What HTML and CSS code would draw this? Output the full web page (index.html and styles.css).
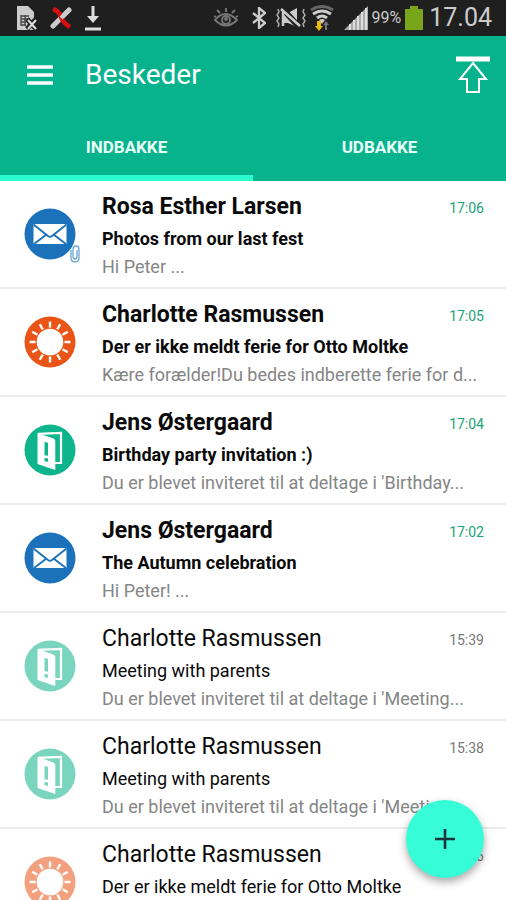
FILE: index.html
```html
<!DOCTYPE html>
<html lang="da">
<head>
<meta charset="utf-8">
<meta name="viewport" content="width=device-width, initial-scale=1">
<title>Beskeder</title>
<link rel="stylesheet" href="styles.css">
</head>
<body>
<svg class="sprite" aria-hidden="true">
  <symbol id="mail" viewBox="0 0 52 52">
    <circle cx="26" cy="26" r="25.500" fill="#1b72ba"/>
    <path d="M9.500 16h33v20h-33z" fill="#fff"/>
    <path d="M9.500 16.500l14.500 11.500q2 1.500 4 0l14.500-11.500M10 36l12.500-9.500M42 36l-12.500-9.500" fill="none" stroke="#1b72ba" stroke-width="1.900"/>
  </symbol>
  <symbol id="sun" viewBox="0 0 52 52">
    <circle cx="26" cy="26" r="25.500" fill="#ea5416"/>
    <circle cx="26" cy="26" r="13.300" fill="#fff"/>
    <g stroke="#fff" stroke-width="2.400">
      <path id="ray" d="M26 5.500v6M26 40.500v6M5.500 26h6M40.500 26h6"/>
      <use href="#ray" transform="rotate(30 26 26)"/>
      <use href="#ray" transform="rotate(60 26 26)"/>
    </g>
  </symbol>
  <symbol id="door" viewBox="0 0 52 52">
    <circle cx="26" cy="26" r="25.500" fill="#0eb48c"/>
    <path d="M14 9.800L37 9V39H31" fill="none" stroke="#fff" stroke-width="2.200"/>
    <path d="M13.500 9l3 1L29.500 14.500q1.800.8 1.800 3v28.500L13.500 40z" fill="#fff"/>
    <path d="M20.500 18l3.500.8v13l-3.500-.6zM20.500 34l3.500.6v3.200l-3.500-.6z" fill="#0eb48c"/>
  </symbol>
</svg>

<div class="status">
  <div class="status-group">
    <svg width="22" height="26" viewBox="0 0 22 26"><path d="M1 1h11l6 6v18H1z" fill="#ccc"/><path d="M5 11h8M5 14h8M5 17h5M5 20h5M5 10v11M9 10v11" stroke="#444" stroke-width="1.300"/><path d="M11 14l9 10M20 14l-9 10" stroke="#222" stroke-width="5"/><path d="M12 15l8 9M20 15l-8 9" stroke="#ddd" stroke-width="2"/></svg>
    <svg width="22" height="24" viewBox="0 0 22 24"><path d="M3 20L19 4" stroke="#ccc" stroke-width="5" stroke-linecap="round"/><path d="M3 3q6 2 8 8t9 10" fill="none" stroke="#d3100f" stroke-width="4.500"/><path d="M11 12l9-9" stroke="#ccc" stroke-width="4"/></svg>
    <svg width="18" height="26" viewBox="0 0 18 26"><path d="M9 1v14M1 24h16" stroke="#ddd" stroke-width="3"/><path d="M3 11h12l-6 7z" fill="#ddd"/></svg>
  </div>
  <div class="status-group status-right">
    <svg width="24" height="20" viewBox="0 0 24 20" fill="none" stroke="#777" stroke-width="1.900"><path d="M1 12q10-12 22 0q-11 11-22 0zM12 4V0M6 5L3 2M18 5l3-3M2 9l-2-1M22 9l2-1"/><circle cx="12" cy="12" r="4"/><circle cx="12" cy="11" r="1" fill="#777"/></svg>
    <svg class="bluetooth" width="14" height="22" viewBox="0 0 14 22" fill="none" stroke="#ccc" stroke-width="2.300"><path d="M1 6l12 10-6 5V1l6 5L1 16"/></svg>
    <svg class="muted" width="30" height="22" viewBox="0 0 30 22"><path d="M7 6h5l9-5v19l-9-4H7z" fill="#ccc"/><path d="M5 0l19 21" stroke="#222" stroke-width="6"/><path d="M7 3v16M5 2l19 17" stroke="#ccc" stroke-width="2.500"/><path d="M2 2l1 3-2 3 2 3-2 3 2 3-1 3M28 2l-1 3 2 3-2 3 2 3-2 3 1 3" fill="none" stroke="#aaa" stroke-width="1.500"/></svg>
    <svg class="wifi" width="24" height="26" viewBox="0 0 24 26"><path d="M1 5q11-7 22 0" fill="none" stroke="#666" stroke-width="3"/><path d="M3 9q9-6 18 0M7 13q5-4 10 0" fill="none" stroke="#ccc" stroke-width="3"/><path d="M9 15q3-2 6 0l-3 4z" fill="#ccc"/><path d="M7 16h4v5h2l-4 5-4-5h2z" fill="#e6b910"/><path d="M15 25v-5h-2l3-4 3 4h-2v5z" fill="#777"/></svg>
    <svg width="24" height="24" viewBox="0 0 24 24"><path d="M0 24L24 0v24z" fill="#aaa"/><path d="M6 18v6M10 14v10M14 10v14M18 6v18M22 2v22" stroke="#ddd" stroke-width="2"/></svg>
    <span class="percent">99%</span>
    <svg width="18" height="26" viewBox="0 0 18 26"><path d="M5 1h8v3h5v21H0V4h5z" fill="#78a51a"/></svg>
    <time class="clock">17.04</time>
  </div>
</div>

<header class="header">
  <div class="toolbar">
    <button class="icon-button" aria-label="Menu"><svg width="26" height="20" viewBox="0 0 26 20"><path d="M0 2h26M0 10h26M0 18h26" stroke="#fff" stroke-width="3.500"/></svg></button>
    <h1 class="title">Beskeder</h1>
    <button class="icon-button" aria-label="Til toppen"><svg width="34" height="38" viewBox="0 0 34 38"><path d="M0 3h34" stroke="#fff" stroke-width="5"/><path d="M17 7L30 23H23V36H11V23H4z" fill="none" stroke="#fff" stroke-width="2"/></svg></button>
  </div>
  <nav class="tabs">
    <a class="tab tab-active" href="#">INDBAKKE</a>
    <a class="tab" href="#">UDBAKKE</a>
  </nav>
</header>

<main class="list">
  <article class="row unread">
    <div class="avatar"><svg class="badge"><use href="#mail"/></svg><svg class="clip" viewBox="0 0 12 18" fill="none" stroke="#67a6d6" stroke-width="1.300"><path d="M2 5v8q0 4 4 4t4-4V5q0-4-3-4T4 5v6q0 3 2 3t2-3V5"/></svg></div>
    <div class="body"><div class="top"><h2 class="name">Rosa Esther Larsen</h2><time class="time">17:06</time></div><p class="subject">Photos from our last fest</p><p class="preview">Hi Peter ...</p></div>
  </article>
  <article class="row unread">
    <div class="avatar"><svg class="badge"><use href="#sun"/></svg></div>
    <div class="body"><div class="top"><h2 class="name">Charlotte Rasmussen</h2><time class="time">17:05</time></div><p class="subject">Der er ikke meldt ferie for Otto Moltke</p><p class="preview">Kære forælder!Du bedes indberette ferie for d...</p></div>
  </article>
  <article class="row unread">
    <div class="avatar"><svg class="badge"><use href="#door"/></svg></div>
    <div class="body"><div class="top"><h2 class="name">Jens Østergaard</h2><time class="time">17:04</time></div><p class="subject">Birthday party invitation :)</p><p class="preview">Du er blevet inviteret til at deltage i 'Birthday...</p></div>
  </article>
  <article class="row unread">
    <div class="avatar"><svg class="badge"><use href="#mail"/></svg></div>
    <div class="body"><div class="top"><h2 class="name">Jens Østergaard</h2><time class="time">17:02</time></div><p class="subject">The Autumn celebration</p><p class="preview">Hi Peter! ...</p></div>
  </article>
  <article class="row">
    <div class="avatar"><svg class="badge"><use href="#door"/></svg></div>
    <div class="body"><div class="top"><h2 class="name">Charlotte Rasmussen</h2><time class="time">15:39</time></div><p class="subject">Meeting with parents</p><p class="preview">Du er blevet inviteret til at deltage i 'Meeting...</p></div>
  </article>
  <article class="row">
    <div class="avatar"><svg class="badge"><use href="#door"/></svg></div>
    <div class="body"><div class="top"><h2 class="name">Charlotte Rasmussen</h2><time class="time">15:38</time></div><p class="subject">Meeting with parents</p><p class="preview">Du er blevet inviteret til at deltage i 'Meeting...</p></div>
  </article>
  <article class="row">
    <div class="avatar"><svg class="badge"><use href="#sun"/></svg></div>
    <div class="body"><div class="top"><h2 class="name">Charlotte Rasmussen</h2><time class="time">15:36</time></div><p class="subject">Der er ikke meldt ferie for Otto Moltke</p></div>
  </article>
</main>

<button class="fab" aria-label="Ny besked"><svg width="20" height="20" viewBox="0 0 20 20"><path d="M10 0v20M0 10h20" stroke="#17353a" stroke-width="2.600"/></svg></button>
</body>
</html>
```

FILE: styles.css
```css
* { box-sizing: border-box; }

body {
  margin: 0;
  height: 100vh;
  display: flex;
  flex-direction: column;
  overflow: hidden;
  background: #fff;
  color: #0a0a0a;
  font-family: Roboto, "Liberation Sans", sans-serif;
}

h1, h2, p { margin: 0; font-weight: 400; }
button { border: 0; padding: 0; background: none; cursor: pointer; }
svg { display: block; flex: none; }
.sprite { position: absolute; width: 0; height: 0; }

.status {
  flex: none;
  display: flex;
  justify-content: space-between;
  height: 36px;
  padding: 0 14px 0 16px;
  background: #1f1f1f;
  border-bottom: 1px solid #0d2b22;
  color: #ccc;
}
.status-group { display: flex; align-items: center; gap: 12px; }
.status-right { gap: 4px; }
.bluetooth { margin-left: 10px; }
.muted { margin-left: 6px; }
.wifi { margin-right: 6px; }
.percent { font-size: 16px; }
.clock { margin-left: 2px; font-size: 25px; }

.header { flex: none; background: #06b38d; color: #fff; }
.toolbar {
  display: flex;
  align-items: center;
  height: 78px;
  padding: 0 16px 0 27px;
}
.icon-button { flex: none; }
.title { flex: 1; padding-left: 32px; font-size: 28px; line-height: 38px; }
.tabs { display: flex; height: 67px; }
.tab {
  flex: 1;
  padding-top: 5px;
  border-bottom: 6px solid transparent;
  color: #e8fff8;
  font-size: 17px;
  font-weight: 700;
  line-height: 56px;
  text-align: center;
  text-decoration: none;
}
.tab-active { border-bottom-color: #2bfbd1; }

.list { flex: 1; min-height: 0; overflow: hidden; }
.row {
  display: flex;
  align-items: center;
  height: 108px;
  padding-right: 22px;
  border-bottom: 2px solid #ebebeb;
}
.avatar { position: relative; flex: none; width: 102px; padding-left: 24px; opacity: 0.55; }
.unread .avatar { opacity: 1; }
.badge { width: 52px; height: 52px; }
.clip { position: absolute; left: 69px; bottom: -3px; width: 12px; height: 18px; }
.body { flex: 1; min-width: 0; align-self: flex-start; padding-top: 8px; }
.top { display: flex; align-items: center; justify-content: space-between; }
.name { font-size: 23px; line-height: 36px; }
.time { padding-top: 2px; color: #777; font-size: 14px; }
.subject { font-size: 18px; line-height: 28px; }
.preview { overflow: hidden; color: #858585; font-size: 18px; line-height: 28px; white-space: nowrap; }
.unread .name, .unread .subject { font-weight: 700; }
.unread .time { color: #1aa477; }

.fab {
  position: fixed;
  right: 22px;
  bottom: 22px;
  display: grid;
  place-items: center;
  width: 78px;
  height: 78px;
  border-radius: 50%;
  background: #36fdd7;
  box-shadow: 0 4px 8px rgba(0, 0, 0, 0.35);
}
```
